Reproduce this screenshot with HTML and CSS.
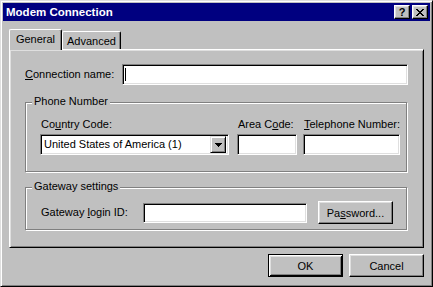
FILE: index.html
```html
<!DOCTYPE html>
<html lang="en">
<head>
    <meta charset="UTF-8">
    <title>Modem Connection</title>
    <link rel="stylesheet" href="styles.css">
</head>
<body>
    <div class="window">
        <div class="titlebar">
            <span class="title">Modem Connection</span>
            <div class="title-buttons">
                <button class="tbtn">?</button>
                <button class="tbtn">
                    <svg width="8" height="7" viewBox="0 0 8 7" shape-rendering="crispEdges">
                        <rect x="0" y="0" width="2" height="1"/><rect x="6" y="0" width="2" height="1"/>
                        <rect x="1" y="1" width="2" height="1"/><rect x="5" y="1" width="2" height="1"/>
                        <rect x="2" y="2" width="4" height="1"/>
                        <rect x="3" y="3" width="2" height="1"/>
                        <rect x="2" y="4" width="4" height="1"/>
                        <rect x="1" y="5" width="2" height="1"/><rect x="5" y="5" width="2" height="1"/>
                        <rect x="0" y="6" width="2" height="1"/><rect x="6" y="6" width="2" height="1"/>
                    </svg>
                </button>
            </div>
        </div>

        <div class="content">
            <div class="tabs">
                <div class="tab active">General</div>
                <div class="tab">Advanced</div>
            </div>

            <div class="panel">
                <div class="conn-row">
                    <span class="conn-label"><u>C</u>onnection name:</span>
                    <div class="field conn-field"><span class="caret"></span></div>
                </div>

                <div class="group phone">
                    <span class="legend">Phone Number</span>
                    <div class="phone-grid">
                        <span class="lbl">Co<u>u</u>ntry Code:</span>
                        <span class="lbl">Area C<u>o</u>de:</span>
                        <span class="lbl tel"><u>T</u>elephone Number:</span>
                        <div class="field combo">
                            <span class="combo-text">United States of America (1)</span>
                            <span class="drop">
                                <svg width="7" height="4" viewBox="0 0 7 4" shape-rendering="crispEdges">
                                    <rect x="0" y="0" width="7" height="1"/>
                                    <rect x="1" y="1" width="5" height="1"/>
                                    <rect x="2" y="2" width="3" height="1"/>
                                    <rect x="3" y="3" width="1" height="1"/>
                                </svg>
                            </span>
                        </div>
                        <div class="field"></div>
                        <div class="field tel"></div>
                    </div>
                </div>

                <div class="group gateway">
                    <span class="legend">Gateway settings</span>
                    <div class="gateway-row">
                        <span class="gw-label">Gateway <u>l</u>ogin ID:</span>
                        <div class="field gw-field"></div>
                        <button class="btn pw-btn">Pa<u>s</u>sword...</button>
                    </div>
                </div>
            </div>

            <div class="actions">
                <button class="btn default">OK</button>
                <button class="btn">Cancel</button>
            </div>
        </div>
    </div>
</body>
</html>
```

FILE: styles.css
```css
body {
    margin: 0;
    font-family: "Liberation Sans", Arial, sans-serif;
    font-size: 11px;
    line-height: 13px;
    color: #000;
    background: #c0c0c0;
}

u {
    text-decoration-thickness: 1px;
    text-underline-offset: 1px;
}

.window {
    width: 433px;
    height: 287px;
    box-sizing: border-box;
    padding: 2px;
    border: 1px solid;
    border-color: #dfdfdf #000 #000 #dfdfdf;
    box-shadow: inset 1px 1px #fff, inset -1px -1px #808080;
    background: #c0c0c0;
}

.titlebar {
    height: 18px;
    background: #000080;
    color: #fff;
    display: flex;
    align-items: center;
    justify-content: space-between;
    padding: 0 2px 0 3px;
}

.title {
    font-weight: bold;
    font-size: 11.5px;
}

.title-buttons {
    display: flex;
    gap: 2px;
}

.tbtn {
    width: 16px;
    height: 14px;
    box-sizing: border-box;
    padding: 0;
    background: #c0c0c0;
    border: 1px solid;
    border-color: #fff #000 #000 #fff;
    box-shadow: inset -1px -1px #808080, inset 1px 1px #dfdfdf;
    display: flex;
    align-items: center;
    justify-content: center;
    font: bold 11px "Liberation Sans", Arial, sans-serif;
    color: #000;
}

.content {
    padding: 8px 6px 0;
}

.tabs {
    display: flex;
    align-items: flex-end;
    height: 20px;
    position: relative;
    z-index: 1;
}

.tab {
    box-sizing: border-box;
    height: 18px;
    width: 59px;
    padding-top: 3px;
    text-align: center;
    background: #c0c0c0;
    border: 1px solid;
    border-color: #fff #000 transparent #fff;
    border-bottom: none;
    border-radius: 2px 2px 0 0;
    box-shadow: inset -1px 0 #808080;
}

.tab.active {
    width: 53px;
    height: 21px;
    margin-bottom: -1px;
}

.panel {
    height: 199px;
    box-sizing: border-box;
    padding: 14px 15px 0;
    border: 1px solid;
    border-color: #fff #000 #000 #fff;
    box-shadow: inset 1px 1px #dfdfdf, inset -1px -1px #808080;
    display: flex;
    flex-direction: column;
}

.field {
    box-sizing: border-box;
    height: 21px;
    background: #fff;
    border: 1px solid;
    border-color: #808080 #fff #fff #808080;
    box-shadow: inset 1px 1px #000, inset -1px -1px #dfdfdf;
}

.conn-row {
    display: flex;
    align-items: center;
}

.conn-label {
    width: 97px;
}

.conn-field {
    flex: 1;
    padding: 3px 0 0 2px;
}

.caret {
    display: block;
    width: 1px;
    height: 13px;
    background: #000;
}

.group {
    position: relative;
    box-sizing: border-box;
    margin-right: 1px;
    border: 1px solid #808080;
    box-shadow: 1px 1px #fff, inset 1px 1px #fff;
}

.legend {
    position: absolute;
    top: -8px;
    left: 6px;
    padding: 0 2px;
    background: #c0c0c0;
}

.phone {
    margin-top: 17px;
    height: 70px;
    padding: 15px 0 0 14px;
}

.phone-grid {
    display: grid;
    grid-template-columns: 189px 60px 95px;
    column-gap: 8px;
    row-gap: 3px;
}

.phone-grid .lbl {
    padding-left: 1px;
}

.phone-grid .tel {
    margin-left: -2px;
}

.combo {
    display: flex;
    align-items: center;
    padding: 2px;
}

.combo-text {
    flex: 1;
    padding-left: 1px;
}

.drop {
    width: 16px;
    height: 17px;
    box-sizing: border-box;
    background: #c0c0c0;
    border: 1px solid;
    border-color: #dfdfdf #000 #000 #dfdfdf;
    box-shadow: inset 1px 1px #fff, inset -1px -1px #808080;
    display: flex;
    align-items: center;
    justify-content: center;
}

.gateway {
    margin-top: 15px;
    height: 43px;
    padding: 13px 0 0 14px;
}

.gateway-row {
    display: flex;
    align-items: center;
}

.gw-label {
    width: 103px;
    padding-left: 1px;
    box-sizing: border-box;
}

.gw-field {
    width: 164px;
    height: 20px;
}

.btn {
    width: 75px;
    height: 23px;
    box-sizing: border-box;
    padding: 0;
    background: #c0c0c0;
    border: 1px solid;
    border-color: #fff #000 #000 #fff;
    box-shadow: inset -1px -1px #808080, inset 1px 1px #dfdfdf;
    font: 11px "Liberation Sans", Arial, sans-serif;
    color: #000;
}

.btn.default {
    border-color: #000;
    box-shadow: inset 1px 1px #fff, inset -1px -1px #000, inset 2px 2px #dfdfdf, inset -2px -2px #808080;
}

.pw-btn {
    margin-left: 11px;
}

.actions {
    display: flex;
    justify-content: flex-end;
    gap: 6px;
    margin-top: 6px;
}
```
